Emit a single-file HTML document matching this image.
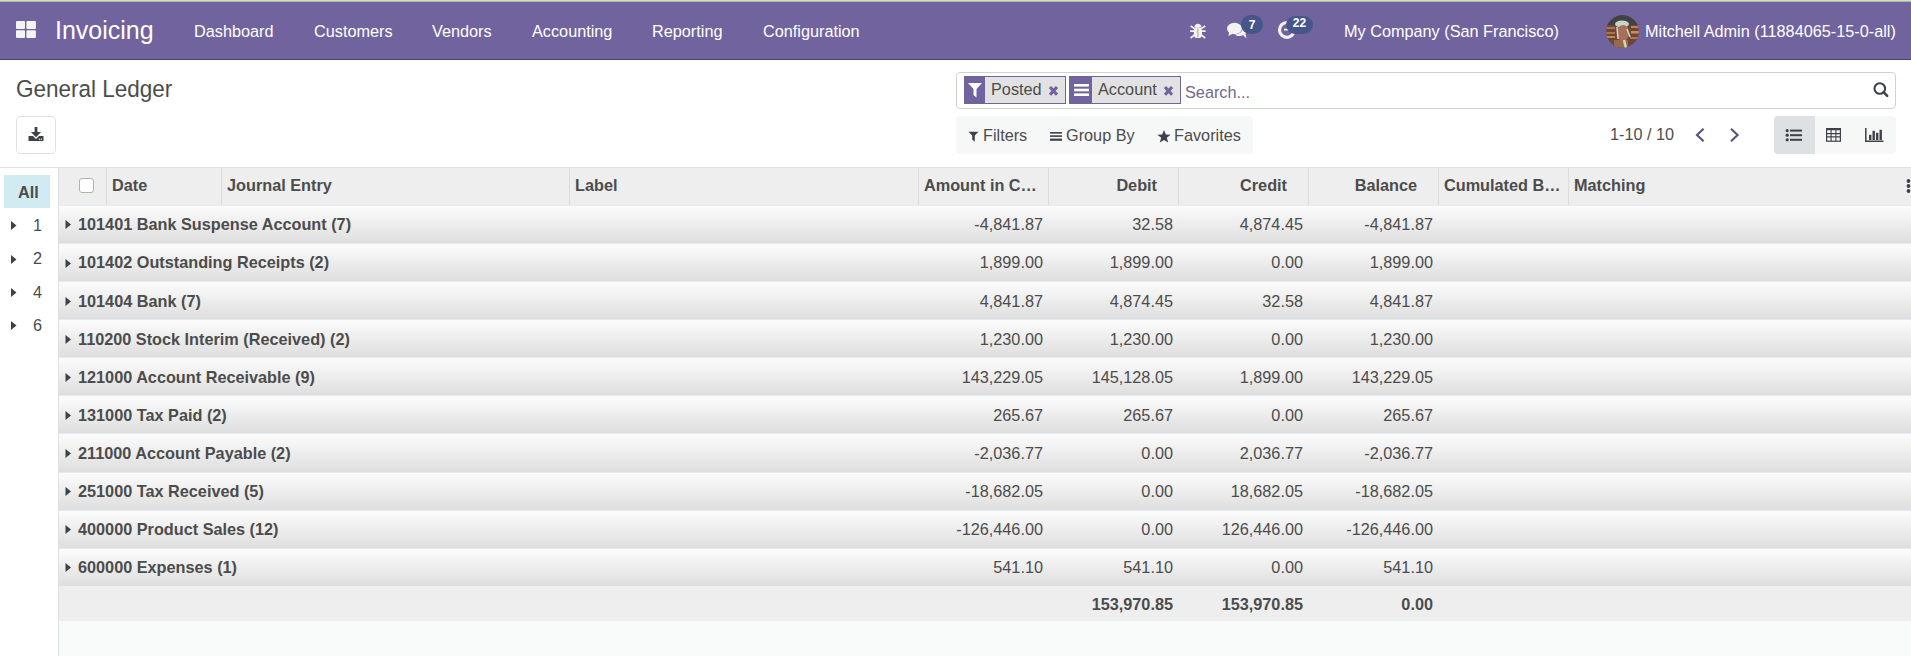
<!DOCTYPE html>
<html><head><meta charset="utf-8">
<style>
*{box-sizing:border-box;margin:0;padding:0}
html,body{width:1911px;height:656px;overflow:hidden;background:#fff}
body{position:relative;font-family:"Liberation Sans",sans-serif;font-size:16.25px;color:#4c4c4c}
.a{position:absolute}
.t{position:absolute;white-space:nowrap;line-height:20px}
.b{font-weight:700}
#topline{left:0;top:0;width:1911px;height:2px;background:linear-gradient(#cfdccf 50%,#aabcaa 50%)}
#nav{left:0;top:2px;width:1911px;height:58px;background:#71639e;border-bottom:1px solid #404777}
#nav .t{color:#fff}
.badge{position:absolute;background:#47568a;color:#fff;font-weight:700;font-size:12px;line-height:19px;text-align:center;border-radius:10px}
#cp .t{color:#4c4c4c}
#content{left:0;top:167px;width:1911px;height:489px;border-top:1px solid #dee2e6}
#side{left:0;top:168px;width:59px;height:488px;background:#fff;border-right:1px solid #dee2e6}
#tbl{left:59px;top:168px;width:1852px;height:488px;background:#f9fafa}
#thead{left:59px;top:168px;width:1852px;height:37px;background:#eee}
.sep{position:absolute;top:168px;width:1px;height:37px;background:#dcdcdc}
.row{position:absolute;left:59px;width:1852px;background:linear-gradient(to bottom,#fcfcfc,#dedede);border-top:1px solid #e5eaee}
#tfoot{left:59px;top:586px;width:1852px;height:35px;background:#eee}
.num{position:absolute;text-align:right;white-space:nowrap;line-height:20px}
</style></head>
<body>
<div id="topline" class="a"></div>
<div id="nav" class="a">
  <!-- apps icon -->
  <svg class="a" style="left:16px;top:19px" width="21" height="18" viewBox="0 0 21 18">
    <rect x="0" y="0" width="9" height="8" rx="0.9" fill="#f4f4f4"/>
    <rect x="10.4" y="0" width="9.5" height="8" rx="0.9" fill="#f4f4f4"/>
    <rect x="0" y="9.2" width="9" height="7.8" rx="0.9" fill="#f4f4f4"/>
    <rect x="10.4" y="9.2" width="9.5" height="7.8" rx="0.9" fill="#f4f4f4"/>
  </svg>
  <div class="t" style="left:55px;top:13px;font-size:25px;line-height:30px;transform:scaleY(1.06);transform-origin:0 24px">Invoicing</div>
  <div class="t" style="left:194px;top:19px">Dashboard</div>
  <div class="t" style="left:314px;top:19px">Customers</div>
  <div class="t" style="left:432px;top:19px">Vendors</div>
  <div class="t" style="left:532px;top:19px">Accounting</div>
  <div class="t" style="left:652px;top:19px">Reporting</div>
  <div class="t" style="left:763px;top:19px">Configuration</div>
  <!-- bug -->
  <svg class="a" style="left:1188px;top:18px" width="20" height="20" viewBox="0 0 20 20">
    <path d="M6.3 7.6 C6.3 2.6 13.5 2.6 13.5 7.6 Z" fill="#f2f2f2"/>
    <rect x="5.8" y="7.2" width="8.2" height="10.8" rx="3.6" fill="#f2f2f2"/>
    <rect x="9.4" y="8.4" width="1" height="9" fill="#b49a80"/>
    <path d="M2.6 6.0 L6.6 8.6 M2.2 11.2 H6.2 M2.6 18 L6.6 14.8 M17.2 6.0 L13.2 8.6 M17.6 11.2 H13.6 M17.2 18 L13.2 14.8" stroke="#f2f2f2" stroke-width="1.7"/>
  </svg>
  <!-- chat -->
  <svg class="a" style="left:1227px;top:20px" width="21" height="18" viewBox="0 0 21 18">
    <ellipse cx="7.5" cy="6.5" rx="7.5" ry="5.8" fill="#f2f2f2"/>
    <path d="M2 10 L1.5 14 L6 11.5 Z" fill="#f2f2f2"/>
    <path d="M8 12.5 C10 14.5 14 14.5 16 13 L19.5 16.5 L18.5 11.5 C20 9 19 6.5 16 5.5 C16 9.5 12 12.5 8 12.5 Z" fill="#f2f2f2"/>
  </svg>
  <div class="badge" style="left:1241px;top:13px;width:22px;height:19px;line-height:21px">7</div>
  <!-- clock -->
  <svg class="a" style="left:1276px;top:16px" width="22" height="22" viewBox="0 0 22 22">
    <circle cx="10.9" cy="11.9" r="7.4" fill="none" stroke="#f2f2f2" stroke-width="3.2"/>
    <path d="M8 11.6 H12.5" stroke="#f2f2f2" stroke-width="1.8"/>
  </svg>
  <div class="badge" style="left:1286px;top:14px;width:27px;height:18px;border-radius:9px;line-height:15px">22</div>
  <div class="t" style="left:1344px;top:19px">My Company (San Francisco)</div>
  <!-- avatar -->
  <svg class="a" style="left:1606px;top:13px" width="33" height="33" viewBox="0 0 33 33">
    <defs><clipPath id="cc"><circle cx="16.5" cy="16.5" r="16.3"/></clipPath></defs>
    <g clip-path="url(#cc)">
      <rect width="33" height="33" fill="#6e4638"/>
      <rect x="0" y="0" width="33" height="10" fill="#3f4246"/>
      <rect x="0" y="12" width="9" height="2" fill="#b07848"/>
      <rect x="0" y="17" width="9" height="2" fill="#b07848"/>
      <rect x="0" y="21" width="9" height="2" fill="#c08850"/>
      <rect x="25" y="11" width="8" height="2" fill="#c08850"/>
      <rect x="25" y="16" width="8" height="2.5" fill="#c89058"/>
      <rect x="24" y="22" width="9" height="2" fill="#b07848"/>
      <rect x="8" y="25" width="14" height="8" fill="#9a6a48"/>
      <ellipse cx="16" cy="9" rx="7" ry="3.5" fill="#c8d4c4"/>
      <ellipse cx="17" cy="18" rx="6" ry="8" fill="#a87058"/>
      <path d="M11 12 L12 24 M21 14 L24 22" stroke="#c8d8c8" stroke-width="1.6"/>
      <path d="M18 25 L20 33" stroke="#c8d8c8" stroke-width="2.5"/>
    </g>
  </svg>
  <div class="t" style="left:1645px;top:19px">Mitchell Admin (11884065-15-0-all)</div>
</div>

<div id="cp">
  <div class="t" style="left:16px;top:76px;font-size:22.5px;line-height:28px;transform:scaleY(1.08);transform-origin:0 21.7px">General Ledger</div>
  <div class="a" style="left:16px;top:116px;width:40px;height:38px;border:1px solid #dee2e6;border-radius:4px;background:#fff"></div>
  <svg class="a" style="left:28px;top:127px" width="16" height="15" viewBox="0 0 16 15">
    <path d="M6.6 0 H9.4 V5 H13 L8 10.2 L3 5 H6.6 Z" fill="#3e4248"/>
    <path d="M0.5 9 H5 L8 12 L11 9 H15.5 V14 H0.5 Z" fill="#3e4248"/>
    <circle cx="11.4" cy="12.2" r="0.7" fill="#dfe6f0"/><circle cx="13.3" cy="12.2" r="0.7" fill="#dfe6f0"/>
  </svg>
  <!-- search box -->
  <div class="a" style="left:956px;top:72px;width:940px;height:37px;border:1px solid #cad6cc;border-radius:4px;background:#fff"></div>
  <!-- facet 1 -->
  <div class="a" style="left:964px;top:76px;width:102px;height:28px;border:1px solid #71639e;background:#e2e2e2"></div>
  <div class="a" style="left:964px;top:76px;width:21px;height:28px;background:#71639e"></div>
  <svg class="a" style="left:968px;top:83px" width="14" height="15" viewBox="0 0 14 15">
    <path d="M0 0 H14 L8.5 6 V14.5 L5.5 12 V6 Z" fill="#fff"/>
  </svg>
  <div class="t" style="left:991px;top:79px">Posted</div>
  <svg class="a" style="left:1048px;top:85px" width="11" height="12" viewBox="0 0 11 12">
    <path d="M2 2 L9 9.8 M9 2 L2 9.8" stroke="#71639e" stroke-width="3.2"/>
  </svg>
  <!-- facet 2 -->
  <div class="a" style="left:1069px;top:76px;width:112px;height:28px;border:1px solid #71639e;background:#e2e2e2"></div>
  <div class="a" style="left:1069px;top:76px;width:23px;height:28px;background:#71639e"></div>
  <svg class="a" style="left:1074px;top:84px" width="15" height="13" viewBox="0 0 15 13">
    <rect x="0" y="0" width="15" height="2.6" fill="#fff"/>
    <rect x="0" y="4.7" width="15" height="2.6" fill="#fff"/>
    <rect x="0" y="9.4" width="15" height="2.6" fill="#fff"/>
  </svg>
  <div class="t" style="left:1098px;top:79px">Account</div>
  <svg class="a" style="left:1163px;top:85px" width="11" height="12" viewBox="0 0 11 12">
    <path d="M2 2 L9 9.8 M9 2 L2 9.8" stroke="#71639e" stroke-width="3.2"/>
  </svg>
  <div class="t" style="left:1185px;top:82px;color:#6f6a8a">Search...</div>
  <svg class="a" style="left:1872px;top:82px" width="17" height="16" viewBox="0 0 17 16">
    <circle cx="7.8" cy="6.5" r="5.3" fill="none" stroke="#3e4248" stroke-width="2.1"/>
    <path d="M11.6 10.2 L15.2 13.8" stroke="#3e4248" stroke-width="2.5" stroke-linecap="round"/>
  </svg>
  <!-- filter bar -->
  <div class="a" style="left:956px;top:116px;width:297px;height:38px;background:#f6f7f7;border-radius:4px"></div>
  <svg class="a" style="left:968px;top:131px" width="11" height="11" viewBox="0 0 11 11">
    <path d="M0.5 0.8 H10.5 L6.8 4.6 V10.8 L4.2 8.6 V4.6 Z" fill="#3e4248"/>
  </svg>
  <div class="t" style="left:983px;top:125px">Filters</div>
  <svg class="a" style="left:1050px;top:132px" width="12" height="10" viewBox="0 0 12 10">
    <rect x="0" y="0" width="12" height="1.6" fill="#3e4248"/>
    <rect x="0" y="3.3" width="12" height="1.6" fill="#3e4248"/>
    <rect x="0" y="6.6" width="12" height="2.2" fill="#3e4248"/>
  </svg>
  <div class="t" style="left:1066px;top:125px">Group By</div>
  <svg class="a" style="left:1157px;top:130px" width="14" height="13" viewBox="0 0 14 13">
    <path d="M7 0 L8.8 4.6 L13.6 4.8 L9.8 7.8 L11.2 12.6 L7 9.9 L2.8 12.6 L4.2 7.8 L0.4 4.8 L5.2 4.6 Z" fill="#3e4248"/>
  </svg>
  <div class="t" style="left:1174px;top:125px">Favorites</div>
  <!-- pager -->
  <div class="t" style="left:1610px;top:124px">1-10 / 10</div>
  <svg class="a" style="left:1695px;top:128px" width="11" height="14" viewBox="0 0 11 14">
    <path d="M8.6 0.8 L2 7 L8.6 13.2" fill="none" stroke="#5a4f82" stroke-width="2.1"/>
  </svg>
  <svg class="a" style="left:1729px;top:128px" width="11" height="14" viewBox="0 0 11 14">
    <path d="M2 0.8 L8.6 7 L2 13.2" fill="none" stroke="#5a4f82" stroke-width="2.1"/>
  </svg>
  <!-- view switcher -->
  <div class="a" style="left:1774px;top:116px;width:122px;height:38px;background:#f6f7f7;border-radius:4px"></div>
  <div class="a" style="left:1774px;top:116px;width:41px;height:38px;background:#dde1e4;border-radius:4px 0 0 4px"></div>
  <svg class="a" style="left:1785px;top:128px" width="18" height="14" viewBox="0 0 18 14">
    <circle cx="2.2" cy="2.6" r="1.6" fill="#3e4248"/><circle cx="2.2" cy="7.2" r="1.6" fill="#3e4248"/><circle cx="2.2" cy="11.8" r="1.6" fill="#3e4248"/>
    <rect x="5" y="1.6" width="12" height="2" fill="#3e4248"/><rect x="5" y="6.2" width="12" height="2" fill="#3e4248"/><rect x="5" y="10.8" width="12" height="2" fill="#3e4248"/>
  </svg>
  <svg class="a" style="left:1826px;top:128px" width="15" height="14" viewBox="0 0 15 14">
    <rect x="0.6" y="0.6" width="13.8" height="12.6" fill="none" stroke="#3e4248" stroke-width="1.2"/>
    <rect x="0" y="0" width="15" height="2.2" fill="#3e4248"/>
    <path d="M0.6 5.6 H14.4 M0.6 8.9 H14.4 M5.1 2 V13.2 M9.9 2 V13.2" stroke="#3e4248" stroke-width="1.1"/>
  </svg>
  <svg class="a" style="left:1865px;top:128px" width="19" height="14" viewBox="0 0 19 14">
    <path d="M0.8 0 V13.2 H18.5" fill="none" stroke="#3e4248" stroke-width="1.5"/>
    <rect x="4" y="6.8" width="2.4" height="5.2" fill="#3e4248"/>
    <rect x="7.5" y="2.8" width="2.4" height="9.2" fill="#3e4248"/>
    <rect x="11" y="4.8" width="2.4" height="7.2" fill="#3e4248"/>
    <rect x="14.5" y="1.8" width="2.4" height="10.2" fill="#3e4248"/>
  </svg>
</div>

<div id="content" class="a"></div>
<div id="side" class="a"></div>
<div class="a" style="left:4px;top:175px;width:46px;height:33px;background:#d0ebf2"></div>
<div class="t b" style="left:18px;top:182px">All</div>
<svg class="a" style="left:11px;top:221px" width="6" height="9" viewBox="0 0 6 9"><path d="M0 0 L5.5 4.5 L0 9 Z" fill="#3e4248"/></svg>
<div class="t" style="left:33px;top:215px">1</div>
<svg class="a" style="left:11px;top:255px" width="6" height="9" viewBox="0 0 6 9"><path d="M0 0 L5.5 4.5 L0 9 Z" fill="#3e4248"/></svg>
<div class="t" style="left:33px;top:248px">2</div>
<svg class="a" style="left:11px;top:288px" width="6" height="9" viewBox="0 0 6 9"><path d="M0 0 L5.5 4.5 L0 9 Z" fill="#3e4248"/></svg>
<div class="t" style="left:33px;top:282px">4</div>
<svg class="a" style="left:11px;top:321px" width="6" height="9" viewBox="0 0 6 9"><path d="M0 0 L5.5 4.5 L0 9 Z" fill="#3e4248"/></svg>
<div class="t" style="left:33px;top:315px">6</div>

<div id="tbl" class="a"></div>
<div id="thead" class="a"></div>
<div id="tfoot" class="a"></div>
<div class="sep" style="left:106px"></div>
<div class="sep" style="left:221px"></div>
<div class="sep" style="left:569px"></div>
<div class="sep" style="left:918px"></div>
<div class="sep" style="left:1048px"></div>
<div class="sep" style="left:1178px"></div>
<div class="sep" style="left:1308px"></div>
<div class="sep" style="left:1438px"></div>
<div class="sep" style="left:1568px"></div>
<div class="a" style="left:79px;top:178px;width:15px;height:15px;border:1px solid #a9b8ab;border-radius:3px;background:#fff"></div>
<div class="t b" style="left:112px;top:175px">Date</div>
<div class="t b" style="left:227px;top:175px">Journal Entry</div>
<div class="t b" style="left:575px;top:175px">Label</div>
<div class="t b" style="left:924px;top:175px">Amount in C…</div>
<div class="t b" style="left:1444px;top:175px">Cumulated B…</div>
<div class="t b" style="left:1574px;top:175px">Matching</div>
<div class="num b" style="right:754px;top:175px">Debit</div>
<div class="num b" style="right:624px;top:175px">Credit</div>
<div class="num b" style="right:494px;top:175px">Balance</div>
<svg class="a" style="left:1906px;top:179px" width="5" height="14" viewBox="0 0 5 14"><circle cx="2.5" cy="2" r="1.9" fill="#3e4248"/><circle cx="2.5" cy="7" r="1.9" fill="#3e4248"/><circle cx="2.5" cy="12" r="1.9" fill="#3e4248"/></svg>
<div class="row" style="top:205px;height:38px"></div>
<svg class="a" style="left:65px;top:220px" width="7" height="9" viewBox="0 0 6 9"><path d="M0 0 L5.5 4.5 L0 9 Z" fill="#3e4248"/></svg>
<div class="t b" style="left:78px;top:214px">101401 Bank Suspense Account (7)</div>
<div class="num" style="right:868px;top:214px">-4,841.87</div>
<div class="num" style="right:738px;top:214px">32.58</div>
<div class="num" style="right:608px;top:214px">4,874.45</div>
<div class="num" style="right:478px;top:214px">-4,841.87</div>
<div class="row" style="top:243px;height:38px"></div>
<svg class="a" style="left:65px;top:259px" width="7" height="9" viewBox="0 0 6 9"><path d="M0 0 L5.5 4.5 L0 9 Z" fill="#3e4248"/></svg>
<div class="t b" style="left:78px;top:252px">101402 Outstanding Receipts (2)</div>
<div class="num" style="right:868px;top:252px">1,899.00</div>
<div class="num" style="right:738px;top:252px">1,899.00</div>
<div class="num" style="right:608px;top:252px">0.00</div>
<div class="num" style="right:478px;top:252px">1,899.00</div>
<div class="row" style="top:281px;height:38px"></div>
<svg class="a" style="left:65px;top:297px" width="7" height="9" viewBox="0 0 6 9"><path d="M0 0 L5.5 4.5 L0 9 Z" fill="#3e4248"/></svg>
<div class="t b" style="left:78px;top:291px">101404 Bank (7)</div>
<div class="num" style="right:868px;top:291px">4,841.87</div>
<div class="num" style="right:738px;top:291px">4,874.45</div>
<div class="num" style="right:608px;top:291px">32.58</div>
<div class="num" style="right:478px;top:291px">4,841.87</div>
<div class="row" style="top:319px;height:38px"></div>
<svg class="a" style="left:65px;top:335px" width="7" height="9" viewBox="0 0 6 9"><path d="M0 0 L5.5 4.5 L0 9 Z" fill="#3e4248"/></svg>
<div class="t b" style="left:78px;top:329px">110200 Stock Interim (Received) (2)</div>
<div class="num" style="right:868px;top:329px">1,230.00</div>
<div class="num" style="right:738px;top:329px">1,230.00</div>
<div class="num" style="right:608px;top:329px">0.00</div>
<div class="num" style="right:478px;top:329px">1,230.00</div>
<div class="row" style="top:357px;height:38px"></div>
<svg class="a" style="left:65px;top:373px" width="7" height="9" viewBox="0 0 6 9"><path d="M0 0 L5.5 4.5 L0 9 Z" fill="#3e4248"/></svg>
<div class="t b" style="left:78px;top:367px">121000 Account Receivable (9)</div>
<div class="num" style="right:868px;top:367px">143,229.05</div>
<div class="num" style="right:738px;top:367px">145,128.05</div>
<div class="num" style="right:608px;top:367px">1,899.00</div>
<div class="num" style="right:478px;top:367px">143,229.05</div>
<div class="row" style="top:395px;height:38px"></div>
<svg class="a" style="left:65px;top:411px" width="7" height="9" viewBox="0 0 6 9"><path d="M0 0 L5.5 4.5 L0 9 Z" fill="#3e4248"/></svg>
<div class="t b" style="left:78px;top:405px">131000 Tax Paid (2)</div>
<div class="num" style="right:868px;top:405px">265.67</div>
<div class="num" style="right:738px;top:405px">265.67</div>
<div class="num" style="right:608px;top:405px">0.00</div>
<div class="num" style="right:478px;top:405px">265.67</div>
<div class="row" style="top:433px;height:39px"></div>
<svg class="a" style="left:65px;top:449px" width="7" height="9" viewBox="0 0 6 9"><path d="M0 0 L5.5 4.5 L0 9 Z" fill="#3e4248"/></svg>
<div class="t b" style="left:78px;top:443px">211000 Account Payable (2)</div>
<div class="num" style="right:868px;top:443px">-2,036.77</div>
<div class="num" style="right:738px;top:443px">0.00</div>
<div class="num" style="right:608px;top:443px">2,036.77</div>
<div class="num" style="right:478px;top:443px">-2,036.77</div>
<div class="row" style="top:472px;height:38px"></div>
<svg class="a" style="left:65px;top:487px" width="7" height="9" viewBox="0 0 6 9"><path d="M0 0 L5.5 4.5 L0 9 Z" fill="#3e4248"/></svg>
<div class="t b" style="left:78px;top:481px">251000 Tax Received (5)</div>
<div class="num" style="right:868px;top:481px">-18,682.05</div>
<div class="num" style="right:738px;top:481px">0.00</div>
<div class="num" style="right:608px;top:481px">18,682.05</div>
<div class="num" style="right:478px;top:481px">-18,682.05</div>
<div class="row" style="top:510px;height:38px"></div>
<svg class="a" style="left:65px;top:525px" width="7" height="9" viewBox="0 0 6 9"><path d="M0 0 L5.5 4.5 L0 9 Z" fill="#3e4248"/></svg>
<div class="t b" style="left:78px;top:519px">400000 Product Sales (12)</div>
<div class="num" style="right:868px;top:519px">-126,446.00</div>
<div class="num" style="right:738px;top:519px">0.00</div>
<div class="num" style="right:608px;top:519px">126,446.00</div>
<div class="num" style="right:478px;top:519px">-126,446.00</div>
<div class="row" style="top:548px;height:38px"></div>
<svg class="a" style="left:65px;top:563px" width="7" height="9" viewBox="0 0 6 9"><path d="M0 0 L5.5 4.5 L0 9 Z" fill="#3e4248"/></svg>
<div class="t b" style="left:78px;top:557px">600000 Expenses (1)</div>
<div class="num" style="right:868px;top:557px">541.10</div>
<div class="num" style="right:738px;top:557px">541.10</div>
<div class="num" style="right:608px;top:557px">0.00</div>
<div class="num" style="right:478px;top:557px">541.10</div>
<div class="num b" style="right:738px;top:594px">153,970.85</div>
<div class="num b" style="right:608px;top:594px">153,970.85</div>
<div class="num b" style="right:478px;top:594px">0.00</div>

</body></html>
